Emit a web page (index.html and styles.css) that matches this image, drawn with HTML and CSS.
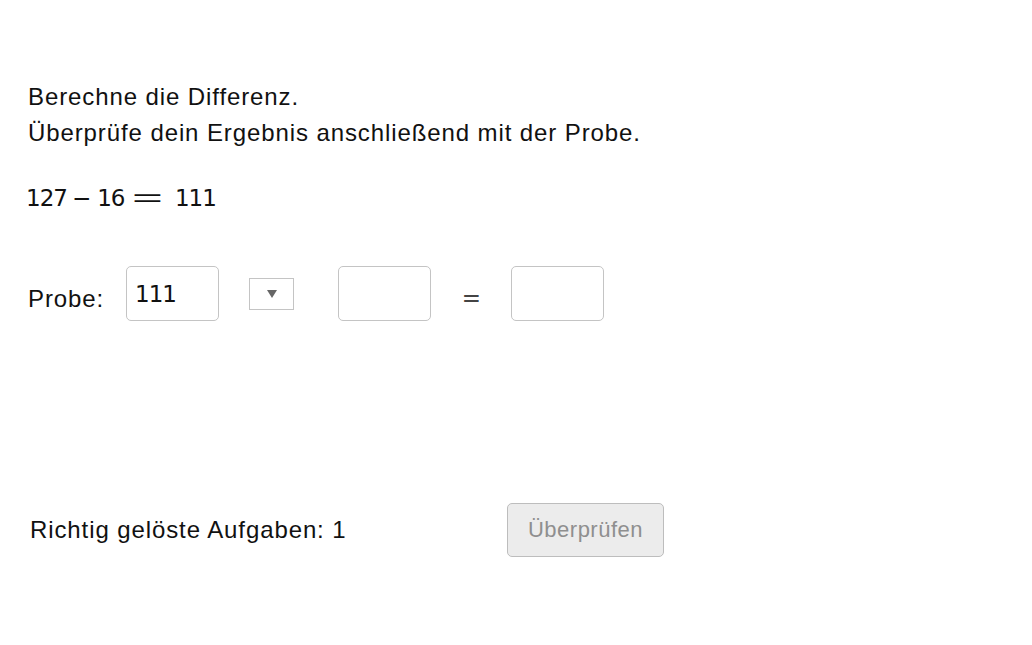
FILE: index.html
```html
<!DOCTYPE html>
<html lang="de">
<head>
    <meta charset="UTF-8">
    <title>Differenz berechnen</title>
    <link rel="stylesheet" href="styles.css">
</head>
<body>
    <div class="task">
        <!-- Aufgabe -->
        <div class="intro">
            <p>Berechne die Differenz.</p>
            <p>Überprüfe dein Ergebnis anschließend mit der Probe.</p>
        </div>

        <p class="equation">127<span class="op">&minus;</span>16<span class="op rel">=</span>111</p>

        <!-- Probe -->
        <div class="probe">
            <span class="probe-label">Probe:</span>
            <div class="field">111</div>
            <div class="select"><span class="arrow"></span></div>
            <div class="field"></div>
            <span class="eq">=</span>
            <div class="field"></div>
        </div>

        <!-- Auswertung -->
        <div class="footer">
            <span class="score">Richtig gelöste Aufgaben: 1</span>
            <button class="check" disabled>Überprüfen</button>
        </div>
    </div>
</body>
</html>
```
FILE: styles.css
```css
body {
    margin: 0;
    font-family: 'Liberation Sans', Arial, sans-serif;
    color: #111;
    background: #fff;
}

.task {
    padding: 79px 0 0 28px;
    font-size: 24px;
    letter-spacing: 0.9px;
}

.intro p {
    margin: 0;
    line-height: 36px;
}

/* Zahlen in Mathe-Schrift */
.equation,
.field,
.eq {
    font-family: 'DejaVu Sans', sans-serif;
    font-size: 23px;
    letter-spacing: -1px;
}

.equation {
    margin: 29px 0 0 -2px;
    line-height: 36px;
}

.equation .op {
    display: inline-block;
    margin: 0 7px 0 5px;
}

.equation .op.rel {
    font-family: 'Liberation Sans', Arial, sans-serif;
    transform: scaleX(2.3);
    margin: 0 22px 0 16px;
}

/* Probe-Zeile */
.probe {
    display: flex;
    align-items: center;
    margin-top: 50px;
    height: 55px;
}

.probe-label {
    width: 98px;
    padding-top: 10px;
}

.field {
    box-sizing: border-box;
    width: 93px;
    height: 55px;
    border: 1px solid #c4c4c4;
    border-radius: 5px;
    padding: 13px 0 0 8px;
    line-height: 28px;
}

.select {
    box-sizing: border-box;
    width: 45px;
    height: 32px;
    margin: 0 44px 0 30px;
    border: 1px solid #c4c4c4;
    display: flex;
    justify-content: center;
    align-items: center;
}

.arrow {
    width: 0;
    height: 0;
    border-left: 5px solid transparent;
    border-right: 5px solid transparent;
    border-top: 8px solid #666;
}

.eq {
    width: 80px;
    padding-top: 8px;
    text-align: center;
    color: #444;
}

/* Auswertung */
.footer {
    display: flex;
    align-items: center;
    margin-top: 182px;
    padding-left: 2px;
}

.score {
    width: 477px;
}

.check {
    width: 157px;
    height: 54px;
    background: #ececec;
    border: 1px solid #bdbdbd;
    border-radius: 5px;
    color: #8f8f8f;
    font-family: inherit;
    font-size: 22px;
    letter-spacing: 0.5px;
}
```
